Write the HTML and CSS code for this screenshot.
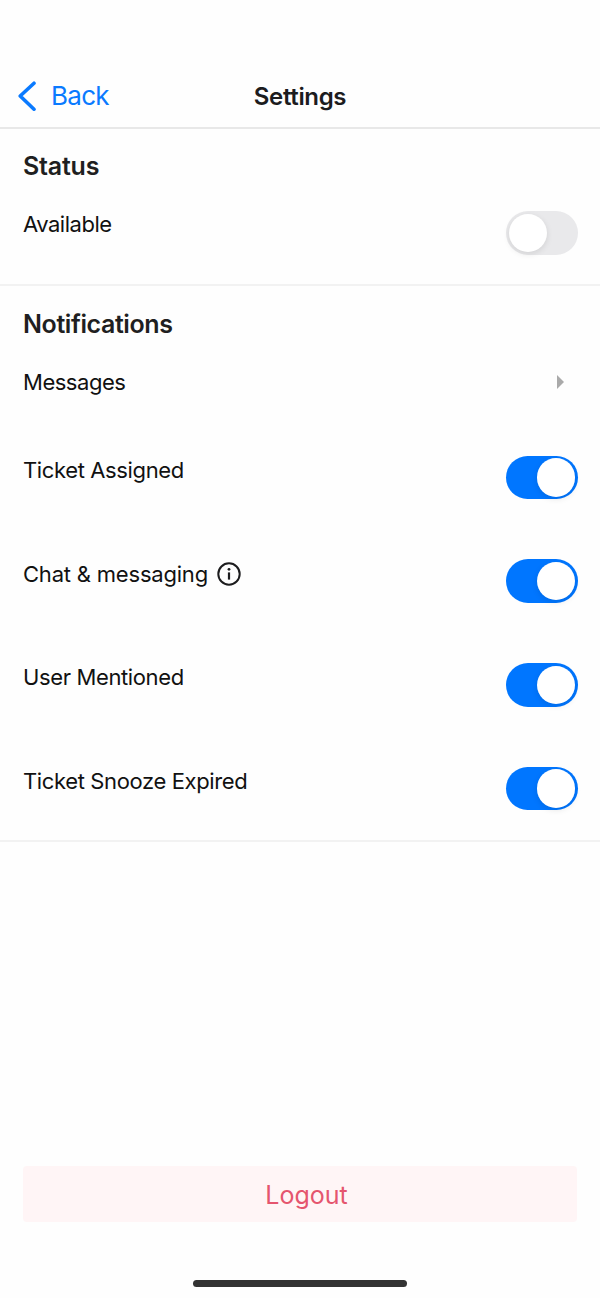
FILE: index.html
```
<!DOCTYPE html>
<html lang="en">

<head>
    <meta charset="utf-8">
    <meta name="viewport" content="width=device-width, initial-scale=1.0">

    <title>Settings</title>

    <link rel="stylesheet" href="styles.css">

</head>

<body>
    <header class="navbar">
        <a class="back" href="#">
            <svg class="back-icon" width="18" height="30" viewBox="0 0 18 30">
                <path d="M16 2.2 L2.2 15 L16 28.2" />
            </svg>
            <span class="back-text">Back</span>
        </a>
        <h1>Settings</h1>
    </header>

    <main>
        <section class="group status">
            <h2>Status</h2>
            <div class="row">
                <p class="short">Available</p>
                <button class="toggle" role="switch" aria-checked="false"></button>
            </div>
        </section>

        <section class="group notifications">
            <h2>Notifications</h2>
            <div class="row">
                <p class="short">Messages</p>
                <span class="arrow"></span>
            </div>
            <div class="row">
                <p>Ticket Assigned</p>
                <button class="toggle on" role="switch" aria-checked="true"></button>
            </div>
            <div class="row">
                <p class="chat">Chat &amp; messaging</p>
                <svg class="info" width="24" height="24" viewBox="0 0 24 24">
                    <circle class="ring" cx="12" cy="12" r="10.7" />
                    <circle cx="12" cy="7.3" r="1.4" />
                    <rect x="10.9" y="10.4" width="2.2" height="7.2" />
                </svg>
                <button class="toggle on" role="switch" aria-checked="true"></button>
            </div>
            <div class="row">
                <p>User Mentioned</p>
                <button class="toggle on" role="switch" aria-checked="true"></button>
            </div>
            <div class="row">
                <p>Ticket Snooze Expired</p>
                <button class="toggle on" role="switch" aria-checked="true"></button>
            </div>
        </section>
    </main>

    <footer>
        <button class="logout">Logout</button>
        <div class="home-bar"></div>
    </footer>
</body>

</html>
```
FILE: styles.css
```
* {
    box-sizing: border-box;
}

body {
    display: flex;
    flex-direction: column;
    height: 1298px;
    margin: 0;
    background: #fefefe;
    color: #111;
    font-family: Inter, "Liberation Sans", sans-serif;
}

h1, h2, p {
    margin: 0;
}

button {
    border: 0;
    padding: 0;
    font-family: inherit;
}

.navbar {
    display: grid;
    grid-template-columns: 1fr auto 1fr;
    align-items: center;
    height: 129px;
    padding: 64px 18px 0;
    border-bottom: 2px solid #e8e8e8;
}

h1 {
    padding-top: 2px;
    font-size: 24px;
    font-weight: 600;
    line-height: 30px;
    letter-spacing: -0.35px;
    color: #1c1c1e;
}

.back {
    display: flex;
    align-items: center;
    gap: 15px;
    color: #0a7aff;
    font-size: 26px;
    line-height: 30px;
    letter-spacing: -0.7px;
    text-decoration: none;
}

.back-text {
    padding-top: 1px;
}

.back-icon {
    fill: none;
    stroke: #0a7aff;
    stroke-width: 3.6;
    stroke-linecap: round;
    stroke-linejoin: round;
}

.group {
    padding: 22px 22.5px 30px 23px;
    border-bottom: 2px solid #f2f2f2;
}

.status {
    padding-bottom: 29px;
}

.notifications {
    padding-top: 23px;
}

h2 {
    margin-bottom: 30px;
    font-size: 25px;
    font-weight: 600;
    line-height: 30px;
    letter-spacing: -0.4px;
    color: #1f1f21;
}

.status h2 {
    letter-spacing: -0.2px;
}

.row {
    display: flex;
    align-items: flex-start;
}

.row + .row {
    margin-top: 60px;
}

p {
    height: 27px;
    font-size: 22px;
    line-height: 29px;
    letter-spacing: -0.37px;
}

.short {
    line-height: 27px;
    letter-spacing: -0.48px;
}

.chat {
    line-height: 30px;
    letter-spacing: -0.2px;
}

.toggle {
    width: 71.5px;
    height: 43.7px;
    margin-left: auto;
    padding: 2.6px;
    border-radius: 22px;
    background: #e9e9eb;
}

.toggle::before {
    content: "";
    display: block;
    width: 38.4px;
    height: 38.4px;
    border-radius: 50%;
    background: #fff;
    box-shadow: 0 2px 6px rgba(0, 0, 0, 0.1);
}

.on {
    background: #0076ff;
}

.on::before {
    margin-left: auto;
}

.arrow {
    margin: 6px 13.5px 0 auto;
    border: 7px solid transparent;
    border-left-color: #aaa;
    border-right: 0;
}

.info {
    margin: 2.5px 0 0 9px;
    fill: #1c1c1e;
}

.ring {
    fill: none;
    stroke: #1c1c1e;
    stroke-width: 2;
}

footer {
    display: flex;
    flex-direction: column;
    align-items: center;
    margin-top: auto;
    padding: 0 23px 11px;
}

.logout {
    width: 100%;
    height: 56px;
    margin-bottom: 58px;
    padding: 2px 0 0 13px;
    border-radius: 4px;
    background: #fff5f6;
    color: #e5556e;
    font-size: 25px;
}

.home-bar {
    width: 214px;
    height: 7px;
    border-radius: 4px;
    background: #333;
}
```
